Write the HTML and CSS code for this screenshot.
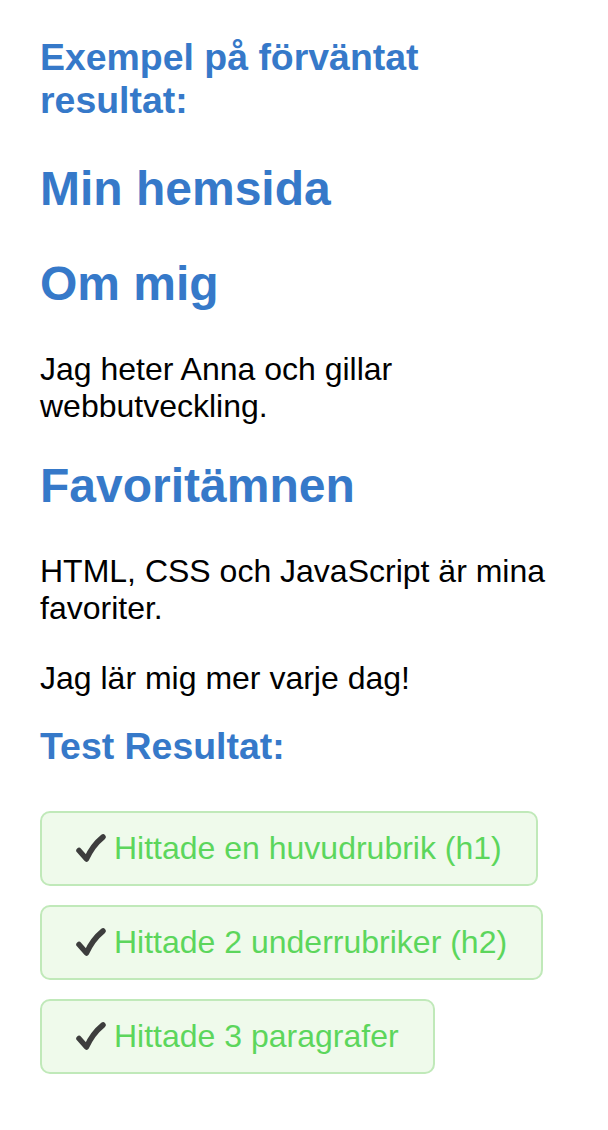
FILE: index.html
```html
<!DOCTYPE html>
<html lang="sv">
<head>
<meta charset="utf-8">
<title>Exempel</title>
<link rel="stylesheet" href="styles.css">
</head>
<body>
<main class="page">
  <h3 class="sub sub-first">Exempel på förväntat resultat:</h3>
  <section class="example">
    <h1 class="head head-main">Min hemsida</h1>
    <h2 class="head head-about">Om mig</h2>
    <p class="text text-about">Jag heter Anna och gillar webbutveckling.</p>
    <h2 class="head head-fav">Favoritämnen</h2>
    <p class="text text-fav">HTML, CSS och JavaScript är mina favoriter.</p>
    <p class="text text-daily">Jag lär mig mer varje dag!</p>
  </section>
  <h3 class="sub sub-test">Test Resultat:</h3>
  <div class="results">
    <div class="result"><svg class="check" viewBox="0 0 30 30" width="30" height="30" aria-hidden="true"><path d="M3 16.5 L10.5 25 C14 17 19 9.5 27 3" fill="none" stroke="#3d3d3d" stroke-width="5.5" stroke-linecap="round" stroke-linejoin="round"/></svg><span>Hittade en huvudrubrik (h1)</span></div>
    <div class="result"><svg class="check" viewBox="0 0 30 30" width="30" height="30" aria-hidden="true"><path d="M3 16.5 L10.5 25 C14 17 19 9.5 27 3" fill="none" stroke="#3d3d3d" stroke-width="5.5" stroke-linecap="round" stroke-linejoin="round"/></svg><span>Hittade 2 underrubriker (h2)</span></div>
    <div class="result"><svg class="check" viewBox="0 0 30 30" width="30" height="30" aria-hidden="true"><path d="M3 16.5 L10.5 25 C14 17 19 9.5 27 3" fill="none" stroke="#3d3d3d" stroke-width="5.5" stroke-linecap="round" stroke-linejoin="round"/></svg><span>Hittade 3 paragrafer</span></div>
  </div>
</main>
</body>
</html>
```

FILE: styles.css
```css
html, body {
  margin: 0;
  padding: 0;
  background: #ffffff;
}

.page {
  padding: 36px 40px 0 40px;
  width: 528px;
  font-family: "Liberation Sans", Arial, Helvetica, sans-serif;
  font-size: 32px;
  color: #000000;
}

.sub {
  font-size: 37.44px;
  font-weight: bold;
  color: #3679c9;
  margin: 0;
  line-height: 43px;
}

.sub-test {
  margin-top: 28px;
}

.example {
  margin: 0;
}

.head {
  font-size: 48px;
  font-weight: bold;
  color: #3679c9;
  margin: 0;
  line-height: 55px;
}

.head-main {
  margin-top: 39px;
}

.head-about {
  margin-top: 40px;
}

.head-fav {
  margin-top: 33px;
}

.text {
  margin: 0;
  line-height: 37px;
}

.text-about {
  margin-top: 40px;
}

.text-fav {
  margin-top: 40px;
}

.text-daily {
  margin-top: 33px;
}

.results {
  display: flex;
  flex-direction: column;
  align-items: flex-start;
  gap: 19px;
  margin-top: 43px;
}

.result {
  display: flex;
  align-items: center;
  gap: 8px;
  padding: 17px 34px 17px 34px;
  border: 2px solid #c0e9b9;
  border-radius: 10px;
  background: #effaeb;
  color: #5cd65c;
  line-height: 37px;
}

.check {
  display: block;
  flex: none;
}
```
